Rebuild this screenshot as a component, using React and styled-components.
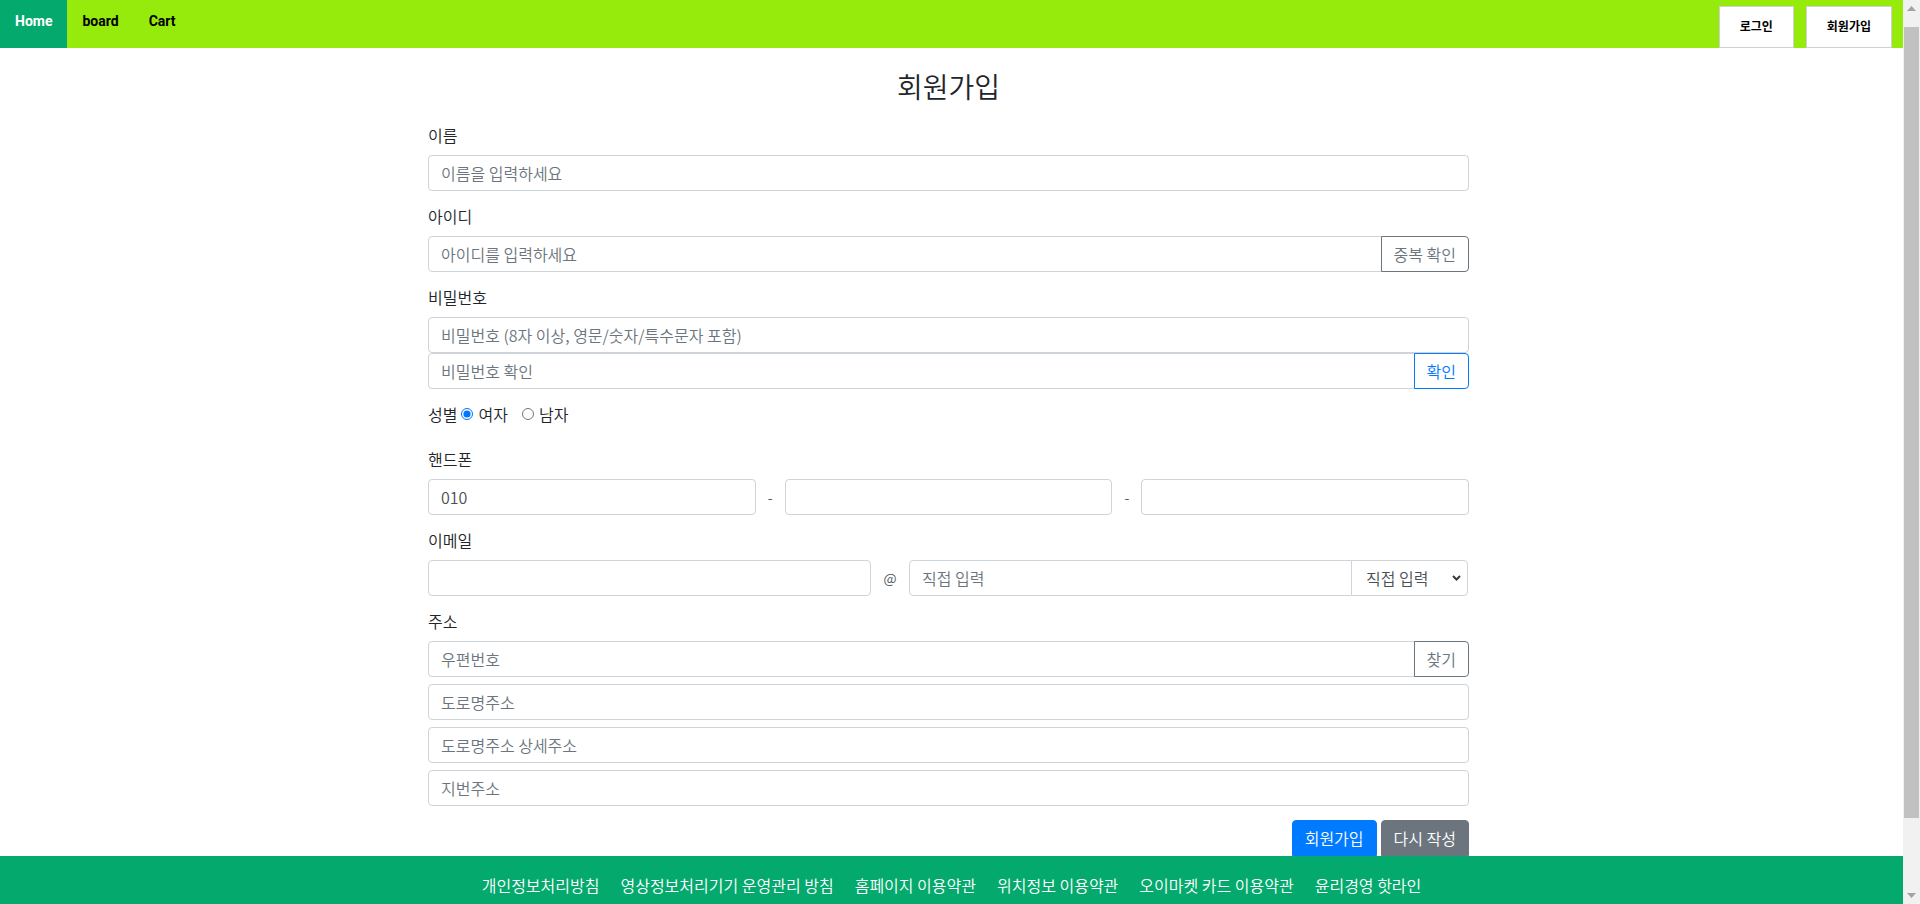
import React from 'react';
import styled, { createGlobalStyle } from 'styled-components';

const GlobalStyle = createGlobalStyle`
  * {
    box-sizing: border-box;
  }

  body {
    margin: 0 17px 0 0;
    background: #fff;
    color: #212529;
    font-family: "Noto Sans CJK KR", "Noto Sans", sans-serif;
    font-size: 16px;
    font-weight: 350;
  }
`;

/* 스크롤바 (화면 오른쪽) */
const ScrollTrack = styled.div`
  position: fixed;
  top: 0;
  right: 0;
  width: 17px;
  height: 100vh;
  background: #f1f1f1;
  display: flex;
  flex-direction: column;
  align-items: center;
`;

const ScrollArrow = styled.div`
  flex: none;
  height: 17px;
  display: flex;
  align-items: center;
  justify-content: center;
`;

const ScrollThumb = styled.div`
  flex: 1;
  width: 15px;
  margin: 10px 0 69px;
  background: #c1c1c1;
`;

/* 상단 네비게이션 */
const TopBar = styled.header`
  display: flex;
  justify-content: space-between;
  height: 48px;
  background: #97eb0c;
  font-family: Roboto, "Noto Sans CJK KR", sans-serif;
`;

const Menu = styled.nav`
  display: flex;
`;

const MenuLink = styled.a`
  display: block;
  padding: 11px 15px 0;
  line-height: 20px;
  font-size: 14px;
  font-weight: 700;
  text-decoration: none;
  color: ${(p) => (p.$active ? '#fff' : '#000')};
  background: ${(p) => (p.$active ? '#04a96d' : 'transparent')};
`;

const AuthGroup = styled.div`
  display: flex;
  align-items: flex-end;
  gap: 12px;
  padding-right: 11px;
`;

const AuthButton = styled.button`
  height: 42px;
  padding: 0 20px 4px;
  background: #fff;
  border: 1px solid #cfcfcf;
  color: #000;
  font-family: "Noto Sans CJK KR", sans-serif;
  font-size: 12px;
  font-weight: 700;
  cursor: pointer;
`;

/* 회원가입 폼 */
const Main = styled.main`
  width: 1047px;
  margin: 0 auto;
  padding: 21px 6px 0 0;
`;

const Title = styled.h3`
  margin: 0 0 20px;
  text-align: center;
  font-size: 28px;
  font-weight: 350;
  line-height: 34px;
`;

const Group = styled.div`
  margin-bottom: ${(p) => (p.$mb !== undefined ? p.$mb : 13)}px;
`;

const Label = styled.label`
  display: block;
  line-height: 24px;
  margin-bottom: 8px;
`;

const Input = styled.input`
  display: block;
  width: 100%;
  min-width: 0;
  height: 36px;
  padding: 0 12px;
  font: inherit;
  color: #495057;
  background: #fff;
  border: 1px solid #ced4da;
  border-radius: ${(p) => (p.$joined ? '4px 0 0 4px' : '4px')};
  outline: none;

  &::placeholder {
    color: #6c757d;
  }
`;

const InputGroup = styled.div`
  display: flex;
`;

const AddonButton = styled.button`
  flex: none;
  height: 36px;
  margin-left: -1px;
  padding: 0 12px;
  font: inherit;
  background: #fff;
  color: ${(p) => (p.$primary ? '#007bff' : '#6c757d')};
  border: 1px solid ${(p) => (p.$primary ? '#007bff' : '#6c757d')};
  border-radius: 0 4px 4px 0;
  cursor: pointer;
`;

const Stack = styled.div`
  display: flex;
  flex-direction: column;
  gap: ${(p) => p.$gap || 0}px;
`;

const GenderRow = styled.div`
  display: flex;
  align-items: center;
  line-height: 24px;
  margin-bottom: 21px;
`;

const RadioLabel = styled.label`
  display: flex;
  align-items: center;
  margin-right: 10px;

  input {
    width: 12px;
    height: 12px;
    margin: 0 5px 0 4px;
  }
`;

const PhoneRow = styled.div`
  display: grid;
  grid-template-columns: 1fr 29px 1fr 29px 1fr;
  align-items: center;
`;

const EmailRow = styled.div`
  display: grid;
  grid-template-columns: 1fr 38px 1fr 117px;
  align-items: center;
`;

const Sep = styled.span`
  text-align: center;
  color: #495057;
  font-size: 14px;
`;

const SelectWrap = styled.div`
  position: relative;
  height: 36px;

  svg {
    position: absolute;
    right: 8px;
    top: 15px;
    pointer-events: none;
  }
`;

const Select = styled.select`
  appearance: none;
  width: 100%;
  height: 36px;
  margin-left: -1px;
  padding: 0 12px 0 14px;
  font: inherit;
  color: #495057;
  background: #fff;
  border: 1px solid #ced4da;
  border-radius: 0 4px 4px 0;
  outline: none;
`;

const Actions = styled.div`
  display: flex;
  justify-content: flex-end;
  gap: 4px;
`;

const SubmitButton = styled.button`
  height: 36px;
  padding: 0 12px;
  font: inherit;
  color: #fff;
  background: ${(p) => (p.$secondary ? '#6c757d' : '#007bff')};
  border: 1px solid ${(p) => (p.$secondary ? '#6c757d' : '#007bff')};
  border-radius: 4px 4px 0 0;
  cursor: pointer;
`;

/* 하단 푸터 */
const Footer = styled.footer`
  height: 130px;
  padding-top: 17px;
  background: #04a96d;
  display: flex;
  justify-content: center;
  gap: 21px;
  line-height: 24px;

  a {
    color: #fff;
    text-decoration: none;
  }
`;

const Chevron = () => (
  <svg width="9" height="6" viewBox="0 0 9 6">
    <path d="M1 1l3.5 3.5L8 1" fill="none" stroke="#343a40" strokeWidth="2" />
  </svg>
);

const Arrow = ({ down }) => (
  <svg width="9" height="5" viewBox="0 0 9 5">
    <path d={down ? 'M0 0h9L4.5 5z' : 'M0 5h9L4.5 0z'} fill="#a3a3a3" />
  </svg>
);

const footerLinks = [
  '개인정보처리방침',
  '영상정보처리기기 운영관리 방침',
  '홈페이지 이용약관',
  '위치정보 이용약관',
  '오이마켓 카드 이용약관',
  '윤리경영 핫라인',
];

const App = () => {
  return (
    <>
      <GlobalStyle />
      <TopBar>
        <Menu>
          <MenuLink href="#" $active>Home</MenuLink>
          <MenuLink href="#">board</MenuLink>
          <MenuLink href="#">Cart</MenuLink>
        </Menu>
        <AuthGroup>
          <AuthButton>로그인</AuthButton>
          <AuthButton>회원가입</AuthButton>
        </AuthGroup>
      </TopBar>

      <Main>
        <Title>회원가입</Title>

        <Group>
          <Label>이름</Label>
          <Input placeholder="이름을 입력하세요" />
        </Group>

        <Group>
          <Label>아이디</Label>
          <InputGroup>
            <Input $joined placeholder="아이디를 입력하세요" />
            <AddonButton>중복 확인</AddonButton>
          </InputGroup>
        </Group>

        <Group>
          <Label>비밀번호</Label>
          <Input type="password" placeholder="비밀번호 (8자 이상, 영문/숫자/특수문자 포함)" />
          <InputGroup>
            <Input $joined type="password" placeholder="비밀번호 확인" />
            <AddonButton $primary>확인</AddonButton>
          </InputGroup>
        </Group>

        <GenderRow>
          성별
          <RadioLabel>
            <input type="radio" name="gender" defaultChecked />
            여자
          </RadioLabel>
          <RadioLabel>
            <input type="radio" name="gender" />
            남자
          </RadioLabel>
        </GenderRow>

        <Group>
          <Label>핸드폰</Label>
          <PhoneRow>
            <Input defaultValue="010" />
            <Sep>-</Sep>
            <Input />
            <Sep>-</Sep>
            <Input />
          </PhoneRow>
        </Group>

        <Group>
          <Label>이메일</Label>
          <EmailRow>
            <Input />
            <Sep>@</Sep>
            <Input $joined placeholder="직접 입력" />
            <SelectWrap>
              <Select defaultValue="direct">
                <option value="direct">직접 입력</option>
                <option value="naver">naver.com</option>
                <option value="gmail">gmail.com</option>
              </Select>
              <Chevron />
            </SelectWrap>
          </EmailRow>
        </Group>

        <Group $mb={14}>
          <Label>주소</Label>
          <Stack $gap={7}>
            <InputGroup>
              <Input $joined placeholder="우편번호" />
              <AddonButton>찾기</AddonButton>
            </InputGroup>
            <Input placeholder="도로명주소" />
            <Input placeholder="도로명주소 상세주소" />
            <Input placeholder="지번주소" />
          </Stack>
        </Group>

        <Actions>
          <SubmitButton>회원가입</SubmitButton>
          <SubmitButton $secondary>다시 작성</SubmitButton>
        </Actions>
      </Main>

      <Footer>
        {footerLinks.map((text) => (
          <a href="#" key={text}>{text}</a>
        ))}
      </Footer>

      <ScrollTrack>
        <ScrollArrow><Arrow /></ScrollArrow>
        <ScrollThumb />
        <ScrollArrow><Arrow down /></ScrollArrow>
      </ScrollTrack>
    </>
  );
};

export default App;
